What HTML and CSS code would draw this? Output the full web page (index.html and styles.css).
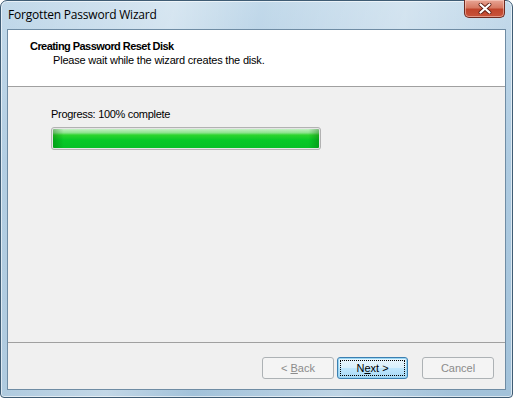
FILE: index.html
```html
<!DOCTYPE html>
<html>
<head>
<meta charset="utf-8">
<link rel="stylesheet" href="styles.css">
</head>
<body>
<div class="window">
  <div class="titlebar">
    <span class="title">Forgotten Password Wizard</span>
    <div class="close">
      <svg width="14" height="11" viewBox="0 0 14 11"><path d="M2.5 1.5 L11.5 9.5 M11.5 1.5 L2.5 9.5" stroke="#5a1a10" stroke-width="3.8" stroke-linecap="round"/><path d="M2.5 1.5 L11.5 9.5 M11.5 1.5 L2.5 9.5" stroke="#ffffff" stroke-width="2.3" stroke-linecap="round"/></svg>
    </div>
  </div>
  <div class="client">
    <div class="header">
      <div class="h-title">Creating Password Reset Disk</div>
      <div class="h-sub">Please wait while the wizard creates the disk.</div>
    </div>
    <div class="content">
      <div class="label">Progress: 100% complete</div>
      <div class="progress"><div class="fill"></div></div>
    </div>
    <div class="footer">
      <button class="btn disabled">&lt; <u>B</u>ack</button>
      <button class="btn default">N<u>e</u>xt &gt;</button>
      <button class="btn disabled cancel">Cancel</button>
    </div>
  </div>
</div>
</body>
</html>
```

FILE: styles.css
```css
html, body {
  margin: 0;
  padding: 0;
  background: #ffffff;
}
body {
  width: 518px;
  height: 402px;
  overflow: hidden;
}
.window {
  box-sizing: border-box;
  width: 513px;
  height: 398px;
  border: 1px solid #3f5c74;
  border-radius: 7px 7px 4px 4px;
  background:
    linear-gradient(100deg, rgba(255,255,255,0) 0%, rgba(255,255,255,0.35) 30%, rgba(255,255,255,0) 45%, rgba(255,255,255,0.3) 70%, rgba(255,255,255,0) 90%),
    linear-gradient(180deg, #c2d9ea 0%, #aecbe1 40%, #a2c2da 100%);
  display: flex;
  flex-direction: column;
  box-shadow: inset 0 0 0 1px rgba(255,255,255,0.6);
}
.titlebar {
  height: 28px;
  display: flex;
  justify-content: space-between;
  align-items: flex-start;
  padding: 0 7px 0 7px;
}
.title {
  font-family: "Open Sans", "Noto Sans", sans-serif;
  font-size: 12px;
  color: #000;
  margin-top: 5px;
  letter-spacing: -0.2px;
}
.close {
  width: 41px;
  height: 18px;
  margin-top: -1px;
  box-sizing: border-box;
  border: 1px solid #6e2a20;
  border-top: none;
  border-radius: 0 0 5px 5px;
  background: linear-gradient(180deg, #e8a595 0%, #d77a63 45%, #c0452c 55%, #c8533a 100%);
  display: flex;
  align-items: center;
  justify-content: center;
  box-shadow: inset 0 0 0 1px rgba(255,220,210,0.5);
}
.client {
  flex: 1;
  margin: 0 6px 7px 6px;
  border: 1px solid #6f8ca4;
  background: #f0f0f0;
  display: flex;
  flex-direction: column;
  font-family: "Liberation Sans", Arial, sans-serif;
  font-size: 11px;
  color: #000;
}
.header {
  height: 57px;
  background: #ffffff;
  border-bottom: 1px solid #a0a0a0;
  box-sizing: border-box;
  padding: 9px 0 0 22px;
}
.h-title {
  font-weight: bold;
  font-size: 11px;
  line-height: 14px;
  letter-spacing: -0.55px;
}
.h-sub {
  padding-left: 23px;
  line-height: 14px;
  letter-spacing: -0.2px;
}
.content {
  flex: 1;
  padding: 20px 0 0 43px;
}
.label {
  line-height: 14px;
  letter-spacing: -0.3px;
}
.progress {
  margin-top: 6px;
  width: 270px;
  height: 23px;
  box-sizing: border-box;
  border: 1px solid #b2b2b2;
  border-radius: 3px;
  background: #e6e6e6;
  padding: 1px;
}
.fill {
  height: 100%;
  border-radius: 1px;
  background:
    linear-gradient(90deg, rgba(0,90,0,0.35) 0%, rgba(0,90,0,0) 4%, rgba(0,90,0,0) 96%, rgba(0,90,0,0.35) 100%),
    linear-gradient(180deg, #c4f0c4 0%, #8ee38e 20%, #2ed42e 32%, #06c927 60%, #05c126 100%);
}
.footer {
  height: 47px;
  box-sizing: border-box;
  border-top: 1px solid #a0a0a0;
  display: flex;
  align-items: flex-start;
  padding: 14px 0 0 254px;
}
.btn {
  width: 72px;
  height: 22px;
  box-sizing: border-box;
  font-family: "Liberation Sans", Arial, sans-serif;
  font-size: 11px;
  padding: 0;
  border-radius: 3px;
  border: 1px solid #707070;
  background: linear-gradient(180deg, #f2f2f2 0%, #ebebeb 48%, #dddddd 52%, #cfcfcf 100%);
  color: #000;
}
.btn.disabled {
  border-color: #adb2b5;
  background: #f4f4f4;
  color: #8b8b8b;
}
.btn.default {
  margin-left: 3px;
  width: 71px;
  border-color: #3c7fb1;
  background: linear-gradient(180deg, #eaf6fd 0%, #d9f0fc 48%, #bee6fd 52%, #a7d9f5 100%);
  box-shadow: inset 0 0 0 1px #9ad6f3;
  outline: 1px dotted #000;
  outline-offset: -4px;
}
.btn.cancel {
  margin-left: 14px;
}
```
